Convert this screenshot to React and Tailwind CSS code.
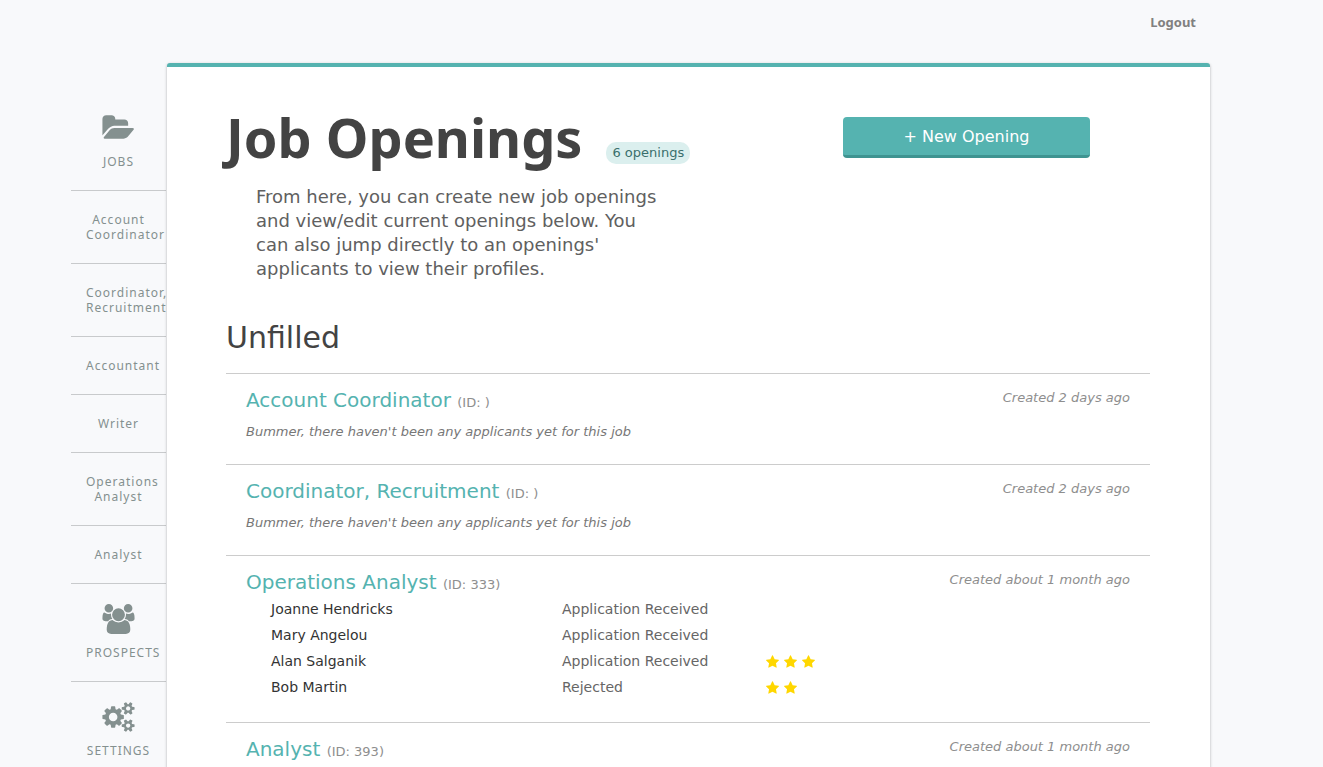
const NAV_ICONS = {
  jobs: {
    viewBox: '0 0 1920 1792',
    path: 'M1879 952q0 31-31 66l-336 396q-43 51-120.5 86.5t-143.5 35.5h-1088q-34 0-60.5-13t-26.5-43q0-31 31-66l336-396q43-51 120.5-86.5t143.5-35.5h1088q34 0 60.5 13t26.5 43zm-343-344v160h-832q-94 0-197 47.5t-164 119.5l-337 396-5 6q0-4-.5-12.5t-.5-12.5v-960q0-92 66-158t158-66h320q92 0 158 66t66 158v32h544q92 0 158 66t66 158z',
  },
  prospects: {
    viewBox: '-64 0 1920 1792',
    path: 'M529 896q-162 5-265 128h-134q-82 0-138-40.5t-56-118.5q0-353 124-353 6 0 43.5 21t97.5 42.5 119 21.5q67 0 133-23-5 37-5 66 0 139 81 256zm1071 637q0 120-73 189.5t-194 69.5h-874q-121 0-194-69.5t-73-189.5q0-53 3.5-103.5t14-109 26.5-108.5 43-97.5 62-81 85.5-53.5 111.5-20q10 0 43 21.5t73 48 107 48 135 21.5 135-21.5 107-48 73-48 43-21.5q61 0 111.5 20t85.5 53.5 62 81 43 97.5 26.5 108.5 14 109 3.5 103.5zm-1024-1277q0 106-75 181t-181 75-181-75-75-181 75-181 181-75 181 75 75 181zm704 384q0 159-112.5 271.5t-271.5 112.5-271.5-112.5-112.5-271.5 112.5-271.5 271.5-112.5 271.5 112.5 112.5 271.5zm576 225q0 78-56 118.5t-138 40.5h-134q-103-123-265-128 81-117 81-256 0-29-5-66 66 23 133 23 59 0 119-21.5t97.5-42.5 43.5-21q124 0 124 353zm-128-609q0 106-75 181t-181 75-181-75-75-181 75-181 181-75 181 75 75 181z',
  },
  settings: {
    viewBox: '-64 0 1920 1792',
    path: 'M832 896q0-106-75-181t-181-75-181 75-75 181 75 181 181 75 181-75 75-181zm768 512q0-52-38-90t-90-38-90 38-38 90q0 53 37.5 90.5t90.5 37.5 90.5-37.5 37.5-90.5zm0-1024q0-52-38-90t-90-38-90 38-38 90q0 53 37.5 90.5t90.5 37.5 90.5-37.5 37.5-90.5zm-384 421v185q0 10-7 19.5t-16 10.5l-155 24q-11 35-32 76 34 48 90 115 7 11 7 20 0 12-7 19-23 30-82.5 89.5t-78.5 59.5q-11 0-21-7l-115-90q-37 19-77 31-11 108-23 155-7 24-30 24h-186q-11 0-20-7.5t-10-17.5l-23-153q-34-10-75-31l-118 89q-7 7-20 7-11 0-21-8-144-133-144-160 0-9 7-19 10-14 41-53t47-61q-23-44-35-82l-152-24q-10-1-17-9.5t-7-19.5v-185q0-10 7-19.5t16-10.5l155-24q11-35 32-76-34-48-90-115-7-11-7-20 0-12 7-20 22-30 82-89t79-59q11 0 21 7l115 90q34-18 77-32 11-108 23-154 7-24 30-24h186q11 0 20 7.5t10 17.5l23 153q34 10 75 31l118-89q8-7 20-7 11 0 21 8 144 133 144 160 0 8-7 19-12 16-42 54t-45 60q23 48 34 82l152 23q10 2 17 10.5t7 19.5zm640 533v140q0 16-149 31-12 27-30 52 51 113 51 138 0 4-4 7-122 71-124 71-8 0-46-47t-52-68q-20 2-30 2t-30-2q-14 21-52 68t-46 47q-2 0-124-71-4-3-4-7 0-25 51-138-18-25-30-52-149-15-149-31v-140q0-16 149-31 13-29 30-52-51-113-51-138 0-4 4-7 4-2 35-20t59-34 30-16q8 0 46 46.5t52 67.5q20-2 30-2t30 2q51-71 92-112l6-2q4 0 124 70 4 3 4 7 0 25-51 138 17 23 30 52 149 15 149 31zm0-1024v140q0 16-149 31-12 27-30 52 51 113 51 138 0 4-4 7-122 71-124 71-8 0-46-47t-52-68q-20 2-30 2t-30-2q-14 21-52 68t-46 47q-2 0-124-71-4-3-4-7 0-25 51-138-18-25-30-52-149-15-149-31v-140q0-16 149-31 13-29 30-52-51-113-51-138 0-4 4-7 4-2 35-20t59-34 30-16q8 0 46 46.5t52 67.5q20-2 30-2t30 2q51-71 92-112l6-2q4 0 124 70 4 3 4 7 0 25-51 138 17 23 30 52 149 15 149 31z',
  },
};

const NAV = [
  { label: 'JOBS', icon: 'jobs' },
  { label: 'Account Coordinator' },
  { label: 'Coordinator, Recruitment' },
  { label: 'Accountant' },
  { label: 'Writer' },
  { label: 'Operations Analyst' },
  { label: 'Analyst' },
  { label: 'PROSPECTS', icon: 'prospects' },
  { label: 'SETTINGS', icon: 'settings' },
];

const OPENINGS = [
  { title: 'Account Coordinator', id: '', created: '2 days ago', applicants: [] },
  { title: 'Coordinator, Recruitment', id: '', created: '2 days ago', applicants: [] },
  {
    title: 'Operations Analyst',
    id: '333',
    created: 'about 1 month ago',
    applicants: [
      { name: 'Joanne Hendricks', status: 'Application Received', stars: 0 },
      { name: 'Mary Angelou', status: 'Application Received', stars: 0 },
      { name: 'Alan Salganik', status: 'Application Received', stars: 3 },
      { name: 'Bob Martin', status: 'Rejected', stars: 2 },
    ],
  },
  { title: 'Analyst', id: '393', created: 'about 1 month ago', applicants: null },
];

function NavItem({ label, icon }) {
  const glyph = icon && NAV_ICONS[icon];
  return (
    <li className="border-b border-[#c8cacc] last:border-b-0">
      <a
        href="#"
        className={
          glyph
            ? 'flex flex-col gap-[11px] px-[15px] pt-5 pb-[21px] text-center'
            : 'block px-[15px] py-[21px] text-center'
        }
      >
        {glyph && (
          <svg viewBox={glyph.viewBox} className="h-[30px] w-[33px] self-center fill-[#84908f]" aria-hidden="true">
            <path d={glyph.path} />
          </svg>
        )}
        <span className="block">{label}</span>
      </a>
    </li>
  );
}

function Stars({ count }) {
  return (
    <span className="flex gap-[5px]" role="img" aria-label={`${count} stars`}>
      {Array.from({ length: count }, (_, i) => (
        <svg key={i} viewBox="64 0 1664 1664" className="size-[13px] fill-[#ffd700]" aria-hidden="true">
          <path d="M1728 647q0 22-26 48l-363 354 86 500q1 7 1 20 0 21-10.5 35.5t-30.5 14.5q-19 0-40-12l-449-236-449 236q-22 12-40 12-21 0-31.5-14.5t-10.5-35.5q0-6 2-20l86-500-364-354q-25-27-25-48 0-37 56-46l502-73 225-455q19-41 49-41t49 41l225 455 502 73q56 9 56 46z" />
        </svg>
      ))}
    </span>
  );
}

function Opening({ title, id, created, applicants }) {
  return (
    <article className="border-t border-[#cccccc] px-5 pt-3 pb-[22px]">
      <div className="flex items-start justify-between">
        <h3 className="text-xl leading-7 text-[#55b3b0]">
          <a href="#">{title}</a>{' '}
          <small className="text-[13px] leading-none text-[#8e8e8e]">(ID: {id})</small>
        </h3>
        <p className="text-[13px] leading-6 text-[#8e8e8e] italic">Created {created}</p>
      </div>
      {applicants && applicants.length === 0 && (
        <p className="mt-2 text-[13px] leading-5 text-[#777777] italic">
          Bummer, there haven't been any applicants yet for this job
        </p>
      )}
      {applicants && applicants.length > 0 && (
        <table className="ml-[25px] text-sm">
          <tbody>
            {applicants.map((a) => (
              <tr key={a.name} className="h-[26px]">
                <td className="w-[291px] p-0">
                  <a href="#" className="text-[#333333]">{a.name}</a>
                </td>
                <td className="w-[204px] p-0 text-[#666666]">{a.status}</td>
                <td className="p-0">{a.stars > 0 && <Stars count={a.stars} />}</td>
              </tr>
            ))}
          </tbody>
        </table>
      )}
    </article>
  );
}

export default function App() {
  return (
    <div className="flex min-h-screen flex-col bg-[#f8f9fb] pr-[113px] pl-[71px] font-['DejaVu_Sans',sans-serif]">
      <header className="flex h-[63px] shrink-0 justify-end px-[14px] pt-[13px]">
        <a href="#" className="font-['Noto_Sans',sans-serif] text-[13px] leading-[18px] font-bold text-[#808080]">
          Logout
        </a>
      </header>
      <div className="flex flex-1 items-start">
        <nav className="w-24 shrink-0 pt-[30px] pr-px font-['Noto_Sans',sans-serif] text-xs leading-[15px] tracking-[1px] text-[#84908f]">
          <ul>
            {NAV.map((item) => (
              <NavItem key={item.label} {...item} />
            ))}
          </ul>
        </nav>
        <main className="relative min-w-0 flex-1 rounded-[3px] border-t-4 border-[#55b3b0] bg-white pt-[50px] pr-[60px] pb-10 pl-[59px] shadow-[0_1px_3px_rgba(0,0,0,0.3)]">
          <div className="flex items-start justify-between pr-[60px]">
            <div>
              <div className="flex items-start gap-6">
                <h1 className="font-['Noto_Sans',sans-serif] text-[54px] leading-10 font-bold text-[#434343]">
                  Job Openings
                </h1>
                <span className="mt-[25px] rounded-[10px] bg-[#dbefee] px-1.5 text-[13px] leading-[22px] text-[#3a6f6c]">
                  6 openings
                </span>
              </div>
              <p className="mt-[21px] ml-[30px] w-[412px] text-lg leading-6 text-[#606060]">
                From here, you can create new job openings and view/edit current openings below. You can also jump
                directly to an openings' applicants to view their profiles.
              </p>
            </div>
            <button
              type="button"
              className="h-[41px] w-[247px] rounded-[4px] border-b-3 border-[#3f9491] bg-[#55b3b0] pt-px text-base text-white"
            >
              + New Opening
            </button>
          </div>
          <section>
            <h2 className="mt-[39px] mb-[17px] text-[30px] leading-9 text-[#434343]">Unfilled</h2>
            {OPENINGS.map((o) => (
              <Opening key={o.title} {...o} />
            ))}
          </section>
        </main>
      </div>
    </div>
  );
}
